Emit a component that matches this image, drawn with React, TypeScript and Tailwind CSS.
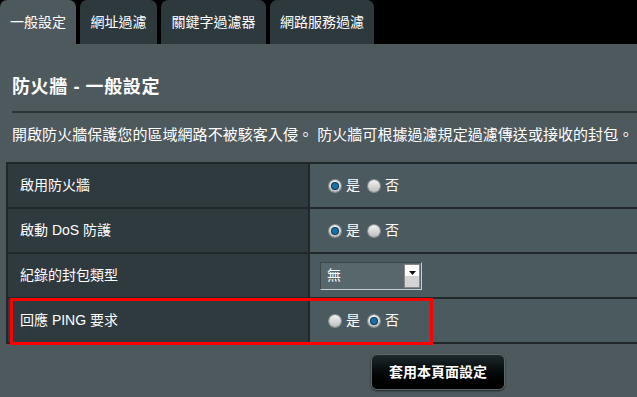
import React from "react";

const font = { fontFamily: '"Liberation Sans", Arial, "Noto Sans CJK TC", sans-serif' };

function Radio({ checked }: { checked: boolean }) {
  return (
    <span className="inline-flex h-[12px] w-[12px] items-center justify-center rounded-full bg-gradient-to-b from-[#f4f4f4] to-[#bdbdbd] shadow-[0_0_0_1px_#8a8f92]">
      {checked && <span className="h-[6px] w-[6px] rounded-full bg-[#1b6fa3] shadow-[0_0_0_1px_#0b3a59]" />}
    </span>
  );
}

function YesNo({ yes }: { yes: boolean }) {
  return (
    <div className="flex items-center text-[14px] text-white">
      <Radio checked={yes} />
      <span className="ml-[5px]">是</span>
      <span className="ml-[8px] inline-flex"><Radio checked={!yes} /></span>
      <span className="ml-[5px]">否</span>
    </div>
  );
}

function Row({ label, children, highlight }: { label: string; children: React.ReactNode; highlight?: boolean }) {
  return (
    <div className="relative flex h-[45px] border-b-2 border-[#222829]">
      <div className="flex w-[300px] items-center bg-[#2f3a3f] pl-[12px] text-[14px] text-white">{label}</div>
      <div className="w-[2px] bg-[#222829]" />
      <div className="flex flex-1 items-center bg-[#4b5a5f] pl-[19px]">{children}</div>
      {highlight && (
        <div className="pointer-events-none absolute left-[2px] top-[-1px] h-[47px] w-[423px] border-[3px] border-[#ff0000]" />
      )}
    </div>
  );
}

export default function App() {
  return (
    <div className="h-[397px] w-[637px] overflow-hidden bg-[#4e595e]" style={font}>
      <div className="flex h-[44px] items-end gap-[4px] bg-black">
        <div className="flex h-[44px] w-[76px] items-center justify-center rounded-t-[7px] bg-[#4e595e] text-[14px] text-white">一般設定</div>
        <div className="flex h-[44px] w-[77px] items-center justify-center rounded-t-[7px] bg-[#2e393e] text-[14px] text-white">網址過濾</div>
        <div className="flex h-[44px] w-[105px] items-center justify-center rounded-t-[7px] bg-[#2e393e] text-[14px] text-white">關鍵字過濾器</div>
        <div className="flex h-[44px] w-[104px] items-center justify-center rounded-t-[7px] bg-[#2e393e] text-[14px] text-white">網路服務過濾</div>
      </div>
      <div className="pl-[12px] pt-[30px]">
        <div className="text-[18px] font-bold leading-[26px] tracking-[0.6px] text-white">防火牆 - 一般設定</div>
        <div className="mt-[11px] h-[2px] bg-[#2d3438]" />
        <div className="mt-[12px] whitespace-nowrap text-[15px] leading-[20px] tracking-[0.05px] text-white">
          開啟防火牆保護您的區域網路不被駭客入侵。 防火牆可根據過濾規定過濾傳送或接收的封包。
        </div>
      </div>
      <div className="ml-[6px] mt-[17px] border-l-2 border-t-2 border-[#222829]">
        <Row label="啟用防火牆"><YesNo yes={true} /></Row>
        <Row label="啟動 DoS 防護"><YesNo yes={true} /></Row>
        <Row label="紀錄的封包類型">
          <div className="-ml-[9px] flex h-[28px] w-[102px] items-center border border-[#3d4649] border-b-[#c8cdd0] border-r-[#c8cdd0] bg-[#57676c] pl-[6px] text-[14px] text-white">
            <span className="flex-1">無</span>
            <span className="mr-[1px] flex h-[24px] w-[16px] flex-col border border-[#888]">
              <span className="flex flex-1 items-end justify-center bg-white pb-[1px]">
                <svg width="7" height="4" viewBox="0 0 7 4"><path d="M0 0h7L3.5 4z" fill="#111" /></svg>
              </span>
              <span className="flex-1 bg-[#d4d4d4]" />
            </span>
          </div>
        </Row>
        <Row label="回應 PING 要求" highlight><YesNo yes={false} /></Row>
      </div>
      <div className="flex justify-center pl-[239px] pt-[10px]">
        <button className="flex h-[36px] w-[134px] items-center justify-center rounded-[6px] border border-[#5d676b] bg-gradient-to-b from-[#1e2a2e] to-black text-[14px] font-bold text-white shadow-[0_1px_2px_rgba(0,0,0,0.6)]">
          套用本頁面設定
        </button>
      </div>
    </div>
  );
}
